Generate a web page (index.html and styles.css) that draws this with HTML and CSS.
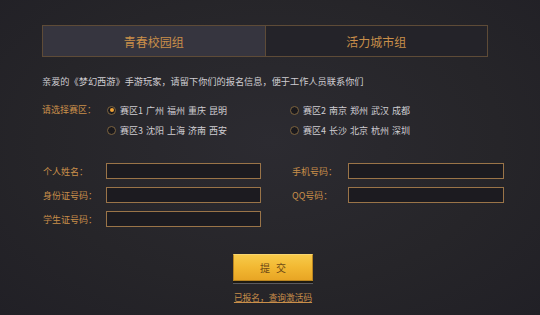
FILE: index.html
```html
<!DOCTYPE html>
<html lang="zh-CN">

<head>
  <meta charset="UTF-8" />
  <meta name="viewport" content="width=device-width, initial-scale=1.0" />
  <title>梦幻西游 报名</title>
  <link rel="stylesheet" href="styles.css">
</head>

<body>

  <div class="page">
    <div class="tabs">
      <div class="tab active">青春校园组</div>
      <div class="tab">活力城市组</div>
    </div>

    <p class="intro">亲爱的《梦幻西游》手游玩家，请留下你们的报名信息，便于工作人员联系你们</p>

    <div class="zone">
      <span class="zone-label">请选择赛区：</span>
      <div class="zone-list">
        <label class="option checked"><span class="radio"></span>赛区1 广州 福州 重庆 昆明</label>
        <label class="option"><span class="radio"></span>赛区2 南京 郑州 武汉 成都</label>
        <label class="option"><span class="radio"></span>赛区3 沈阳 上海 济南 西安</label>
        <label class="option"><span class="radio"></span>赛区4 长沙 北京 杭州 深圳</label>
      </div>
    </div>

    <div class="fields">
      <span class="field-label">个人姓名：</span>
      <input type="text" class="field" />
      <span class="field-label right">手机号码：</span>
      <input type="text" class="field wide" />

      <span class="field-label">身份证号码：</span>
      <input type="text" class="field" />
      <span class="field-label right">QQ号码：</span>
      <input type="text" class="field wide" />

      <span class="field-label">学生证号码：</span>
      <input type="text" class="field" />
    </div>

    <div class="actions">
      <button class="submit">提 交</button>
      <a href="#" class="query">已报名，查询激活码</a>
    </div>
  </div>

</body>

</html>
```

FILE: styles.css
```css
:root {
  --gold-text: #c98f4a;
  --light-text: #cfcdd2;
  --line: #5e4b37;
  --field-line: #9a7448;
  --field-bg: #1c1b20;
}

body {
  margin: 0;
  height: 315px;
  font-family: "Noto Sans CJK SC", sans-serif;
  background: radial-gradient(ellipse at 50% 45%, #2c2b31 0%, #262529 60%, #212026 100%);
  color: var(--light-text);
}

.page {
  padding: 25px 0 0 42px;
  width: 446px;
}

.tabs {
  display: flex;
  border: 1px solid var(--line);
  height: 30px;
}

.tab {
  flex: 1;
  display: flex;
  align-items: center;
  justify-content: center;
  font-size: 12px;
  color: var(--gold-text);
  background: #242329;
}

.tab.active {
  background: #36353f;
  border-right: 1px solid var(--line);
}

.intro {
  margin: 17px 0 0;
  font-size: 9.2px;
  line-height: 14px;
  white-space: nowrap;
}

.zone {
  display: flex;
  margin-top: 12px;
  font-size: 9px;
}

.zone-label {
  width: 65px;
  line-height: 20px;
  color: var(--gold-text);
}

.zone-list {
  display: grid;
  grid-template-columns: 183px 1fr;
}

.option {
  display: flex;
  align-items: center;
  gap: 4px;
  height: 20px;
  white-space: nowrap;
  word-spacing: 1px;
}

.radio {
  width: 7px;
  height: 7px;
  border: 1px solid #7d6440;
  border-radius: 50%;
  background: #1a191d;
  position: relative;
}

.option.checked .radio::after {
  content: "";
  position: absolute;
  top: 1.5px;
  left: 1.5px;
  width: 4px;
  height: 4px;
  border-radius: 50%;
  background: #f0a336;
}

.fields {
  display: grid;
  grid-template-columns: 64px 155px 30px 57px 156px;
  row-gap: 8px;
  margin-top: 23px;
  align-items: center;
}

.field-label {
  font-size: 9px;
  color: var(--gold-text);
  padding-left: 1px;
}

.field-label.right {
  grid-column: 4;
}

.field {
  box-sizing: border-box;
  height: 16px;
  width: 155px;
  margin: 0;
  border: 1px solid var(--field-line);
  background: var(--field-bg);
  outline: none;
}

.field.wide {
  width: 156px;
}

.actions {
  display: flex;
  flex-direction: column;
  align-items: center;
  margin-top: 27px;
  padding-left: 16px;
}

.submit {
  width: 80px;
  height: 27px;
  border: 1px solid #b88420;
  border-top-color: #f8d670;
  background: linear-gradient(to bottom, #f7ca4a, #f2b832 50%, #e8a524);
  box-shadow: 0 2px 0 #1d1a12, 0 3px 0 #5a595e;
  color: #6e4a16;
  font-family: "Noto Sans CJK SC", sans-serif;
  font-size: 10px;
  letter-spacing: 2px;
  padding: 0 0 0 2px;
  cursor: pointer;
}

.query {
  margin-top: 10px;
  font-size: 8.7px;
  line-height: 14px;
  color: var(--gold-text);
}
```
